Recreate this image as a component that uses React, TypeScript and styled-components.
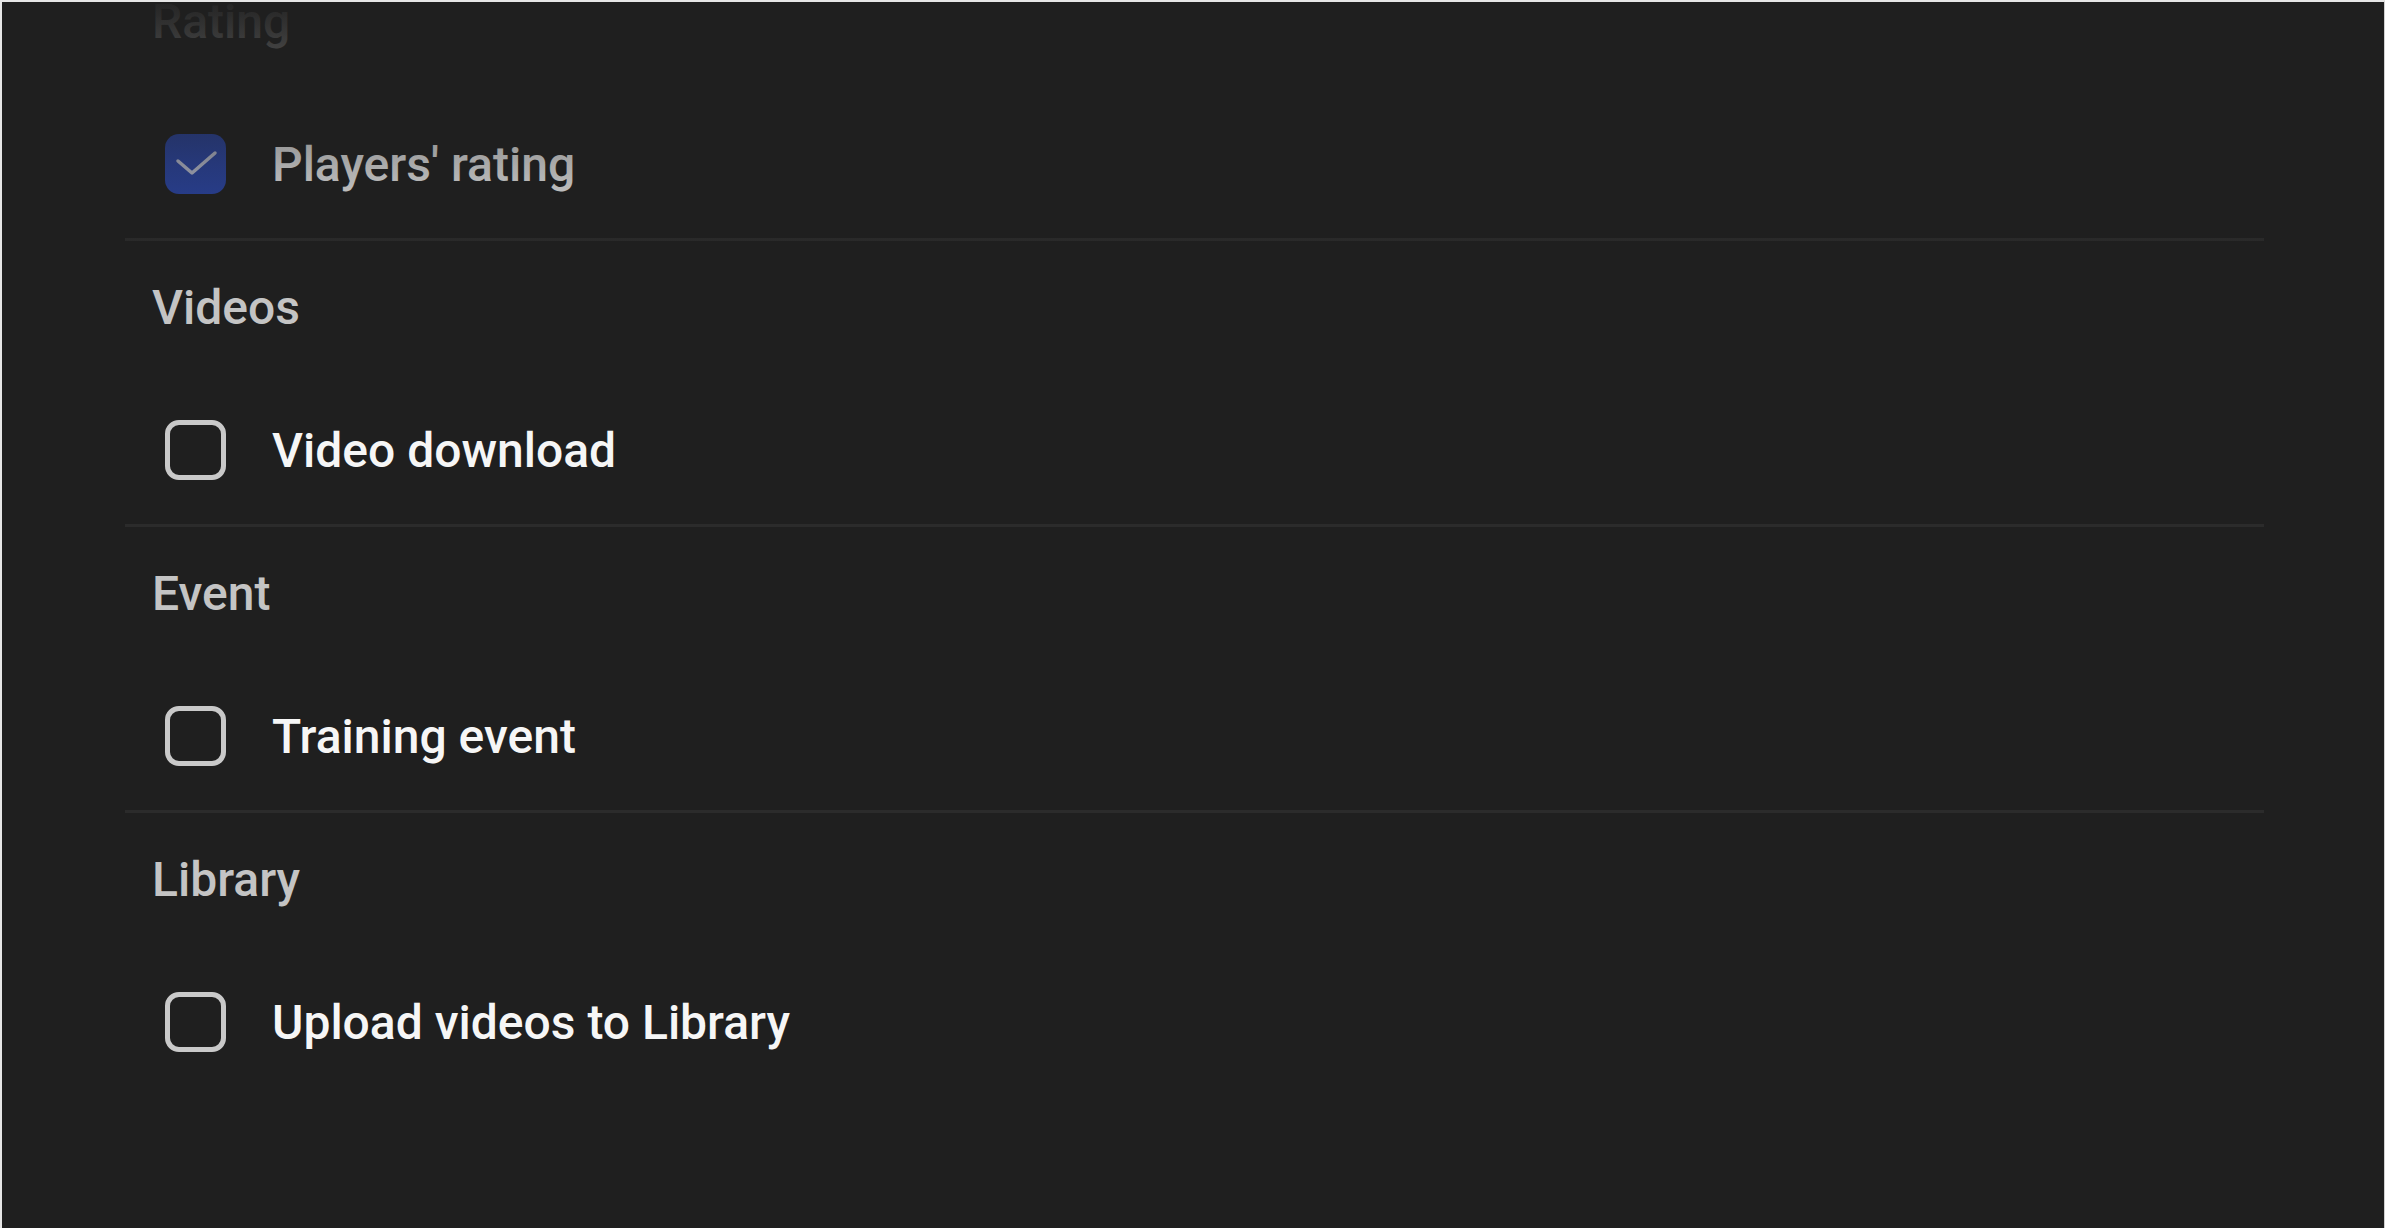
import React from "react";
import styled, { createGlobalStyle } from "styled-components";

const GlobalStyle = createGlobalStyle`
  html, body {
    margin: 0;
    padding: 0;
    background: #1f1f1f;
  }
  body {
    font-family: Roboto, "Liberation Sans", Arial, sans-serif;
  }
`;

const Screen = styled.div`
  position: relative;
  width: 2385px;
  height: 1228px;
  box-sizing: border-box;
  overflow: hidden;
  background: #1f1f1f;
  border-top: 2px solid #e6e6e6;
  border-left: 2px solid #e6e6e6;
  border-right: 1px solid #d0d0d0;
`;

const List = styled.div`
  display: flex;
  flex-direction: column;
  margin: -47px 120px 0 123px;
`;

const Section = styled.section`
  display: flex;
  flex-direction: column;
  padding: 39px 0 43px;
  border-bottom: 3px solid #2b2b2b;

  &:last-child {
    border-bottom: none;
  }
`;

const SectionTitle = styled.h3`
  margin: 0 0 83px 27px;
  font-size: 48px;
  line-height: 56px;
  font-weight: 500;
  color: #c4c4c4;
`;

const Option = styled.label`
  display: flex;
  align-items: center;
  gap: 46px;
  height: 62px;
  padding-left: 40px;
  font-size: 48px;
  font-weight: 500;
  color: #f6f6f6;
`;

const Box = styled.span<{ $checked?: boolean }>`
  display: flex;
  align-items: center;
  justify-content: center;
  width: 61px;
  height: 60px;
  box-sizing: border-box;
  border-radius: 14px;
  border: ${(p) => (p.$checked ? "none" : "5px solid #c9c9c9")};
  background: ${(p) => (p.$checked ? "#2a46ab" : "transparent")};
`;

const Fade = styled.div`
  position: absolute;
  top: 0;
  left: 0;
  right: 0;
  height: 270px;
  pointer-events: none;
  background: linear-gradient(
    to bottom,
    rgba(31, 31, 31, 0.97) 0px,
    rgba(31, 31, 31, 0.86) 30px,
    rgba(31, 31, 31, 0.35) 164px,
    rgba(31, 31, 31, 0) 270px
  );
`;

const Check = () => (
  <svg width="60" height="60" viewBox="0 0 60 60" fill="none">
    <path
      d="M12 27 L26 39 L49 19"
      stroke="#c3c8dc"
      strokeWidth="3.5"
      strokeLinecap="round"
      strokeLinejoin="round"
    />
  </svg>
);

const sections = [
  { title: "Rating", option: "Players' rating", checked: true },
  { title: "Videos", option: "Video download", checked: false },
  { title: "Event", option: "Training event", checked: false },
  { title: "Library", option: "Upload videos to Library", checked: false },
];

export default function App() {
  return (
    <>
      <GlobalStyle />
      <Screen>
        <List>
          {sections.map((s) => (
            <Section key={s.title}>
              <SectionTitle>{s.title}</SectionTitle>
              <Option>
                <Box $checked={s.checked}>{s.checked && <Check />}</Box>
                {s.option}
              </Option>
            </Section>
          ))}
        </List>
        <Fade />
      </Screen>
    </>
  );
}
